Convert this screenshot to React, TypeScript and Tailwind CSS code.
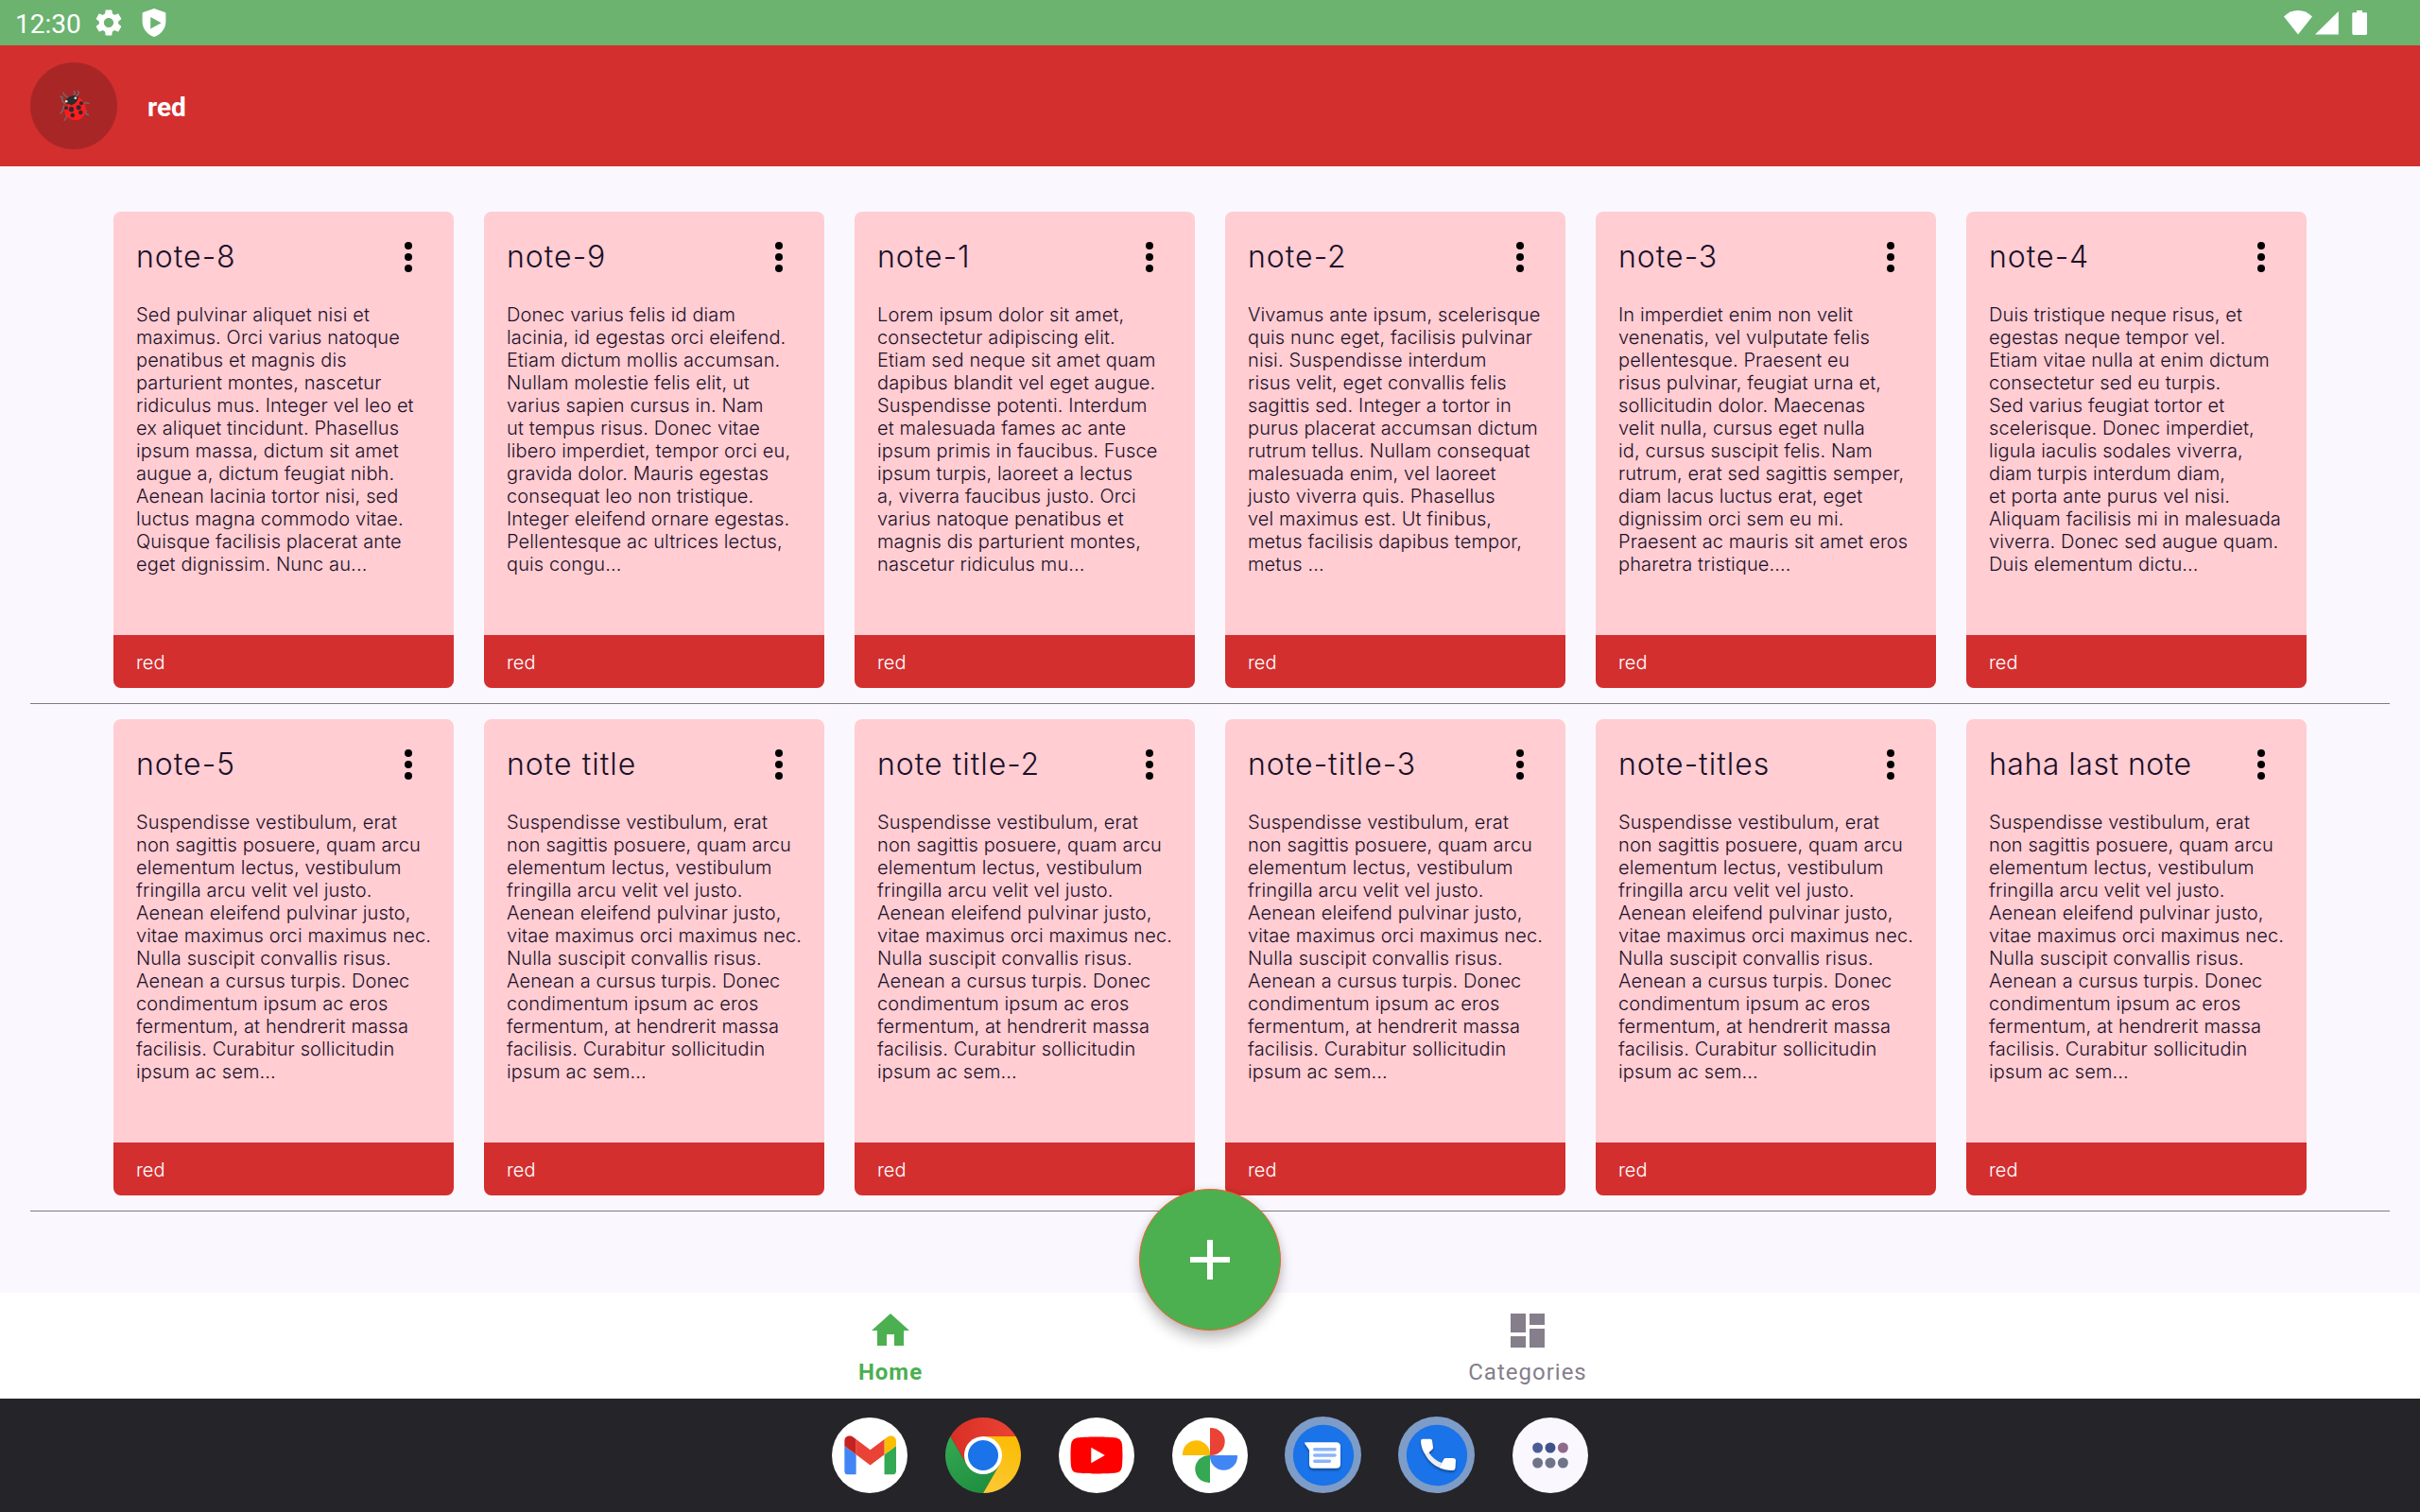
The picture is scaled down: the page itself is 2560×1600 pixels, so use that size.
import React from "react";

type Note = { title: string; lines: string[] };

const suspendisse = [
  "Suspendisse vestibulum, erat",
  "non sagittis posuere, quam arcu",
  "elementum lectus, vestibulum",
  "fringilla arcu velit vel justo.",
  "Aenean eleifend pulvinar justo,",
  "vitae maximus orci maximus nec.",
  "Nulla suscipit convallis risus.",
  "Aenean a cursus turpis. Donec",
  "condimentum ipsum ac eros",
  "fermentum, at hendrerit massa",
  "facilisis. Curabitur sollicitudin",
  "ipsum ac sem...",
];

const firstRow: Note[] = [
  {
    title: "note-8",
    lines: [
      "Sed pulvinar aliquet nisi et",
      "maximus. Orci varius natoque",
      "penatibus et magnis dis",
      "parturient montes, nascetur",
      "ridiculus mus. Integer vel leo et",
      "ex aliquet tincidunt. Phasellus",
      "ipsum massa, dictum sit amet",
      "augue a, dictum feugiat nibh.",
      "Aenean lacinia tortor nisi, sed",
      "luctus magna commodo vitae.",
      "Quisque facilisis placerat ante",
      "eget dignissim. Nunc au...",
    ],
  },
  {
    title: "note-9",
    lines: [
      "Donec varius felis id diam",
      "lacinia, id egestas orci eleifend.",
      "Etiam dictum mollis accumsan.",
      "Nullam molestie felis elit, ut",
      "varius sapien cursus in. Nam",
      "ut tempus risus. Donec vitae",
      "libero imperdiet, tempor orci eu,",
      "gravida dolor. Mauris egestas",
      "consequat leo non tristique.",
      "Integer eleifend ornare egestas.",
      "Pellentesque ac ultrices lectus,",
      "quis congu...",
    ],
  },
  {
    title: "note-1",
    lines: [
      "Lorem ipsum dolor sit amet,",
      "consectetur adipiscing elit.",
      "Etiam sed neque sit amet quam",
      "dapibus blandit vel eget augue.",
      "Suspendisse potenti. Interdum",
      "et malesuada fames ac ante",
      "ipsum primis in faucibus. Fusce",
      "ipsum turpis, laoreet a lectus",
      "a, viverra faucibus justo. Orci",
      "varius natoque penatibus et",
      "magnis dis parturient montes,",
      "nascetur ridiculus mu...",
    ],
  },
  {
    title: "note-2",
    lines: [
      "Vivamus ante ipsum, scelerisque",
      "quis nunc eget, facilisis pulvinar",
      "nisi. Suspendisse interdum",
      "risus velit, eget convallis felis",
      "sagittis sed. Integer a tortor in",
      "purus placerat accumsan dictum",
      "rutrum tellus. Nullam consequat",
      "malesuada enim, vel laoreet",
      "justo viverra quis. Phasellus",
      "vel maximus est. Ut finibus,",
      "metus facilisis dapibus tempor,",
      "metus ...",
    ],
  },
  {
    title: "note-3",
    lines: [
      "In imperdiet enim non velit",
      "venenatis, vel vulputate felis",
      "pellentesque. Praesent eu",
      "risus pulvinar, feugiat urna et,",
      "sollicitudin dolor. Maecenas",
      "velit nulla, cursus eget nulla",
      "id, cursus suscipit felis. Nam",
      "rutrum, erat sed sagittis semper,",
      "diam lacus luctus erat, eget",
      "dignissim orci sem eu mi.",
      "Praesent ac mauris sit amet eros",
      "pharetra tristique....",
    ],
  },
  {
    title: "note-4",
    lines: [
      "Duis tristique neque risus, et",
      "egestas neque tempor vel.",
      "Etiam vitae nulla at enim dictum",
      "consectetur sed eu turpis.",
      "Sed varius feugiat tortor et",
      "scelerisque. Donec imperdiet,",
      "ligula iaculis sodales viverra,",
      "diam turpis interdum diam,",
      "et porta ante purus vel nisi.",
      "Aliquam facilisis mi in malesuada",
      "viverra. Donec sed augue quam.",
      "Duis elementum dictu...",
    ],
  },
];

const secondRow: Note[] = [
  "note-5",
  "note title",
  "note title-2",
  "note-title-3",
  "note-titles",
  "haha last note",
].map((title) => ({ title, lines: suspendisse }));

function StatusBar() {
  return (
    <div className="flex h-12 items-start bg-[#6bb36f] text-white">
      <span className="ml-4 mt-[9px] w-[84px] text-[28px] leading-[33px]">12:30</span>
      <svg className="-ml-0.5 mt-[7px] size-[34px]" viewBox="0 0 24 24" fill="currentColor">
        <path d="M19.14 12.94c.04-.3.06-.61.06-.94 0-.32-.02-.64-.07-.94l2.03-1.58c.18-.14.23-.41.12-.61l-1.92-3.32c-.12-.22-.37-.29-.59-.22l-2.39.96c-.5-.38-1.03-.7-1.62-.94l-.36-2.54c-.04-.24-.24-.41-.48-.41h-3.84c-.24 0-.43.17-.47.41l-.36 2.54c-.59.24-1.13.57-1.62.94l-2.39-.96c-.22-.08-.47 0-.59.22L2.74 8.87c-.12.21-.08.47.12.61l2.03 1.58c-.05.3-.09.63-.09.94s.02.64.07.94l-2.03 1.58c-.18.14-.23.41-.12.61l1.92 3.32c.12.22.37.29.59.22l2.39-.96c.5.38 1.03.7 1.62.94l.36 2.54c.05.24.24.41.48.41h3.84c.24 0 .44-.17.47-.41l.36-2.54c.59-.24 1.13-.56 1.62-.94l2.39.96c.22.08.47 0 .59-.22l1.92-3.32c.12-.22.07-.47-.12-.61l-2.01-1.58zM12 15.6c-1.98 0-3.6-1.62-3.6-3.6s1.62-3.6 3.6-3.6 3.6 1.62 3.6 3.6-1.62 3.6-3.6 3.6z" />
      </svg>
      <svg className="ml-[18px] mt-2 h-8 w-[26px]" viewBox="0 0 26 32" fill="currentColor" fillRule="evenodd">
        <path d="M13 1 24.4 5.1Q25.4 5.5 25.4 6.6V14.5C25.4 22.5 20.5 28.5 13 31 5.5 28.5.6 22.5.6 14.5V6.6Q.6 5.5 1.6 5.1ZM9.2 10V22.4L20.6 16.2Z" />
      </svg>
      <svg className="ml-auto mr-[54px] mt-2 h-8 w-[92px]" viewBox="0 0 92 32" fill="currentColor">
        <path d="M2 9.5C10.5.9 23.5.9 32 9.5L17 28.4Z" />
        <path d="M59.8 4V28.6H35Z" />
        <path d="M79 3h6v2.3h3.8q1.2 0 1.2 1.2V27.6q0 1.3-1.3 1.3H75.6q-1.3 0-1.3-1.3V6.5q0-1.2 1.2-1.2H79Z" />
      </svg>
    </div>
  );
}

function Ladybug() {
  return (
    <svg className="h-9 w-9" viewBox="-2 -1 36 36" fill="none">
      <g stroke="#6f6d70" strokeWidth="1.4" strokeLinejoin="round" strokeLinecap="round">
        <path d="M9.5 8 6 5.5 5 3M16 5.5 17.5 4 16.5 1.5M19 6.5 21.5 4 20.5 1.5" />
        <path d="M7 15 4 12 4 8 2 7M5.5 17 4.5 21.5 2 25M8 25 8.5 28.5 6 32.5M26 15 28.5 13.5 32 14.5M27 21 29 22 29 25.5 31.5 26.5" />
      </g>
      <path d="M7 16.5C11 15.5 17 14.5 21 8 26.5 10.5 29.3 17 28.8 21.5 28.3 28 23.5 32.3 18.5 32.3 10.5 32.3 4.8 26 6 18Z" fill="#fb1d20" />
      <path d="M7.500 13C7.500 9.500 12 5.500 17 6L20.800 8.300C20 11.500 18.500 13.500 16.500 15L8 15Z" fill="#2c2c2c" />
      <path d="M11.500 15 16.500 14.500 13.800 16.500Z" fill="#2c2c2c" />
      <circle cx="8.200" cy="12.300" r="1.300" fill="#f9e3cf" />
      <circle cx="17.800" cy="8.700" r="1.300" fill="#f9e3cf" />
      <g fill="#2e2a2c">
        <circle cx="24" cy="14.200" r="2" />
        <circle cx="21.200" cy="18.700" r="2.500" />
        <circle cx="13.500" cy="20.700" r="2.700" />
        <circle cx="8" cy="19.200" r="1.900" />
        <circle cx="23.300" cy="24" r="2.200" />
        <circle cx="14.800" cy="27" r="2.300" />
      </g>
    </svg>
  );
}

function Header() {
  return (
    <header className="flex h-32 items-center bg-[#d32f2f] pl-8">
      <div className="flex size-[92px] items-center justify-center rounded-full bg-[#a92626]">
        <Ladybug />
      </div>
      <h1 className="ml-8 mt-[3px] text-[28px] font-bold leading-8 text-white">red</h1>
    </header>
  );
}

function NoteCard({ note }: { note: Note }) {
  const tracking = note.title.length > 12 ? "tracking-[0.5px]" : "tracking-[1px]";
  return (
    <article className="flex h-[504px] w-[360px] flex-col overflow-hidden rounded-lg bg-[#ffcdd2] font-['Inter',sans-serif] text-[#1b1029]">
      <div className="flex items-center justify-between px-6 pt-6">
        <h2 className={`whitespace-nowrap text-[32px] font-light leading-[48px] ${tracking}`}>{note.title}</h2>
        <svg className="size-12" viewBox="0 0 24 24" fill="#000">
          <circle cx="12" cy="6" r="2" />
          <circle cx="12" cy="12" r="2" />
          <circle cx="12" cy="18" r="2" />
        </svg>
      </div>
      <div className="mt-[25px] flex-1 whitespace-nowrap pl-6 text-[20px] font-[340] leading-6 tracking-[0.12px]">
        {note.lines.map((line) => (
          <p key={line}>{line}</p>
        ))}
      </div>
      <footer className="flex h-14 items-center bg-[#d32f2f] pl-6 pt-0.5 text-[20px] font-[350] leading-6 text-white">
        red
      </footer>
    </article>
  );
}

function NoteRow({ notes }: { notes: Note[] }) {
  return (
    <section className="mx-8 border-b border-[#807b84] pb-4">
      <div className="flex justify-center gap-8">
        {notes.map((note) => (
          <NoteCard key={note.title} note={note} />
        ))}
      </div>
    </section>
  );
}

function BottomNav() {
  return (
    <nav className="relative flex h-28 bg-white pl-[605px] text-[24px] leading-7 tracking-[1px]">
      <div className="flex w-[674px] flex-col items-center pt-4 font-bold text-[#4caf50]">
        <svg className="size-12" viewBox="0 0 24 24" fill="currentColor">
          <path d="M10 20v-6h4v6h5v-8h3L12 3 2 12h3v8z" />
        </svg>
        <span className="mt-1.5">Home</span>
      </div>
      <div className="flex w-[674px] flex-col items-center pt-4 text-[#857e8b]">
        <svg className="size-12" viewBox="0 0 24 24" fill="currentColor">
          <path d="M3 13h8V3H3v10zm0 8h8v-6H3v6zm10 0h8V11h-8v10zm0-18v6h8V3h-8z" />
        </svg>
        <span className="mt-1.5">Categories</span>
      </div>
      <button className="absolute -top-[110px] left-[1205px] flex size-[150px] items-center justify-center rounded-full border border-[#f4622f] bg-[#4caf50] shadow-[0_10px_14px_rgba(0,0,0,0.22),0_0_8px_rgba(0,0,0,0.10)]">
        <svg className="size-[72px]" viewBox="0 0 24 24" fill="#fff">
          <path d="M19 13h-6v6h-2v-6H5v-2h6V5h2v6h6v2z" />
        </svg>
      </button>
    </nav>
  );
}

const Gmail = () => (
  <svg className="size-20" viewBox="0 0 80 80">
    <circle cx="40" cy="40" r="40" fill="#fff" />
    <svg x="13.2" y="19.3" width="54.8" height="41.1" viewBox="52 42 88 66">
      <path fill="#4285f4" d="M58 108h14V74L52 59v43c0 3.32 2.69 6 6 6" />
      <path fill="#34a853" d="M120 108h14c3.32 0 6-2.69 6-6V59l-20 15" />
      <path fill="#fbbc04" d="M120 48v26l20-15v-8c0-7.42-8.47-11.65-14.4-7.2" />
      <path fill="#ea4335" d="M72 74V48l24 18 24-18v26L96 92" />
      <path fill="#c5221f" d="M52 51v8l20 15V48l-5.6-4.2c-5.94-4.45-14.4-.22-14.4 7.2" />
    </svg>
  </svg>
);

const Chrome = () => (
  <svg className="size-20" viewBox="0 0 80 80">
    <defs>
      <linearGradient id="chrome-red" x1="0" x2="1">
        <stop offset="0" stopColor="#d93025" />
        <stop offset="1" stopColor="#ea4335" />
      </linearGradient>
      <linearGradient id="chrome-green" x1="0.7" y1="1" x2="0.2" y2="0">
        <stop offset="0" stopColor="#1e8e3e" />
        <stop offset="1" stopColor="#34a853" />
      </linearGradient>
      <linearGradient id="chrome-yellow" x1="0.3" y1="1" x2="0.6" y2="0">
        <stop offset="0" stopColor="#fcc934" />
        <stop offset="1" stopColor="#fbbc04" />
      </linearGradient>
    </defs>
    <path d="M40 40 22.700 50 5.360 20A40 40 0 0 1 74.640 20H40Z" fill="url(#chrome-red)" />
    <path d="M5.360 20A40 40 0 0 0 40 80L57.300 50 40 40 22.700 50Z" fill="url(#chrome-green)" />
    <path d="M74.640 20A40 40 0 0 1 40 80L57.300 50 40 40V20Z" fill="url(#chrome-yellow)" />
    <circle cx="40" cy="40" r="20" fill="#fff" />
    <circle cx="40" cy="40" r="16" fill="#1a73e8" />
  </svg>
);

const YouTube = () => (
  <svg className="size-20" viewBox="0 0 80 80">
    <circle cx="40" cy="40" r="40" fill="#fff" />
    <svg x="12.3" y="12.3" width="55.4" height="55.4" viewBox="0 0 24 24">
      <path fill="#f00" d="M23.498 6.186a3.016 3.016 0 0 0-2.122-2.136C19.505 3.545 12 3.545 12 3.545s-7.505 0-9.377.505A3.017 3.017 0 0 0 .502 6.186C0 8.07 0 12 0 12s0 3.93.502 5.814a3.016 3.016 0 0 0 2.122 2.136c1.871.505 9.376.505 9.376.505s7.505 0 9.377-.505a3.015 3.015 0 0 0 2.122-2.136C24 15.93 24 12 24 12s0-3.93-.502-5.814z" />
      <path fill="#fff" d="M9.545 15.568V8.432L15.818 12z" />
    </svg>
  </svg>
);

const Photos = () => (
  <svg className="size-20" viewBox="0 0 80 80">
    <circle cx="40" cy="40" r="40" fill="#fff" />
    <path d="M40 11h1.200a14.500 14.500 0 0 1 0 29H40Z" fill="#ea4335" />
    <path d="M69 40v1.200a14.500 14.500 0 0 1-29 0V40Z" fill="#4285f4" />
    <path d="M40 69h-1.200a14.500 14.500 0 0 1 0-29H40Z" fill="#34a853" />
    <path d="M11 40v-1.200a14.500 14.500 0 0 1 29 0V40Z" fill="#fbbc04" />
  </svg>
);

const Messages = () => (
  <svg className="size-20 overflow-visible" viewBox="0 0 80 80">
    <circle cx="39.5" cy="39.5" r="40.5" fill="#7e9cc8" />
    <circle cx="40" cy="40" r="32.2" fill="#1a73e8" />
    <path className="drop-shadow-[0_2px_1px_rgba(0,0,0,0.35)]" d="M21 26.200H53.500Q58 26.200 58 30.700V49.200Q58 53.700 53.500 53.700H29.500Q25 53.700 25 49.200V34.500L20.300 27.700Q19.800 26.200 21 26.200Z" fill="#fff" />
    <path d="M30.800 33.700H52M30.800 40H52M30.800 46.200H46.300" stroke="#8ab4f8" strokeWidth="3.6" strokeLinecap="round" />
  </svg>
);

const Phone = () => (
  <svg className="size-20 overflow-visible" viewBox="0 0 80 80">
    <circle cx="39.5" cy="39.5" r="40.5" fill="#7e9cc8" />
    <circle cx="40" cy="40" r="32.2" fill="#1a73e8" />
    <g className="drop-shadow-[0_2px_1px_rgba(0,0,0,0.35)]">
      <path d="M28 40 31.500 37C35 42.500 39.500 46 45 48L42.300 53C36.500 50.500 31.500 46 28 40Z" fill="#eceef1" />
      <path d="M25.200 22.800H33Q34.700 22.800 35 24.500L36 31.500Q36.200 33 35 34L28.200 40C25 35.500 23 30 23 25Q23 22.800 25.200 22.800Z" fill="#fff" />
      <path d="M49.300 43H57.500Q60 43.200 60 45.500L59.500 53.500Q59.200 56 56.500 56C51 56 46.500 55 42.200 53L47.300 44.300Q48 43 49.300 43Z" fill="#fff" />
    </g>
  </svg>
);

const AppDrawer = () => (
  <svg className="size-20" viewBox="0 0 80 80">
    <circle cx="40" cy="40" r="40" fill="#faf8fe" />
    <circle cx="26.600" cy="32" r="5.500" fill="#4b5f96" />
    <circle cx="40" cy="32" r="5.500" fill="#3f5289" />
    <circle cx="53.400" cy="32" r="5.500" fill="#8f6a8a" />
    <circle cx="26.600" cy="48" r="5.500" fill="#6f7489" />
    <circle cx="40" cy="48" r="5.500" fill="#6f7489" />
    <circle cx="53.400" cy="48" r="5.500" fill="#6f7489" />
  </svg>
);

export default function App() {
  return (
    <div className="flex h-[1600px] w-[2560px] flex-col overflow-hidden bg-[#faf8fe] font-['Roboto',sans-serif]">
      <StatusBar />
      <Header />
      <main className="flex flex-1 flex-col gap-4 pt-12">
        <NoteRow notes={firstRow} />
        <NoteRow notes={secondRow} />
      </main>
      <BottomNav />
      <div className="flex h-[120px] items-center justify-center gap-10 bg-[#252429]">
        <Gmail />
        <Chrome />
        <YouTube />
        <Photos />
        <Messages />
        <Phone />
        <AppDrawer />
      </div>
    </div>
  );
}
